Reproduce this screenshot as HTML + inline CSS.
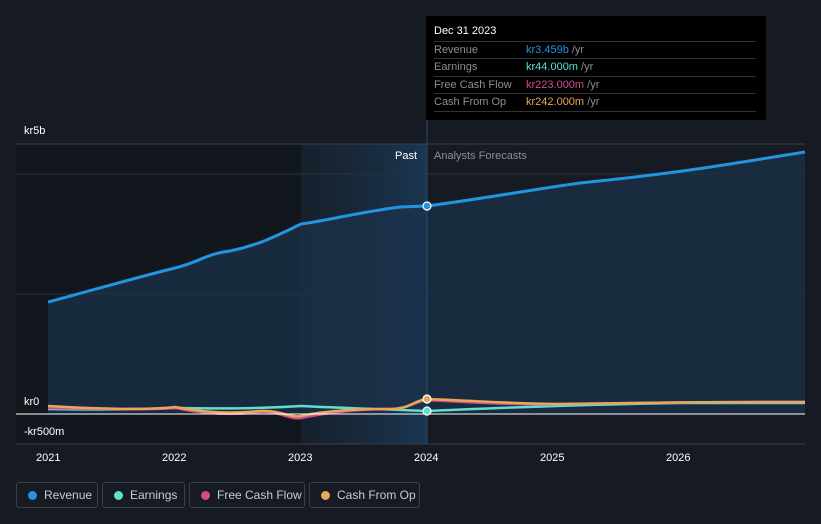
<!DOCTYPE html>
<html><head><style>
body{margin:0;width:821px;height:524px;background:#151a23;font-family:"Liberation Sans",sans-serif;overflow:hidden;position:relative}
.t{position:absolute;font-size:11px;color:#fff}
.leg{position:absolute;top:482px;height:26px;border:1px solid #3a3f49;border-radius:3px;box-sizing:border-box;color:#c9ccd2;font-size:12px;line-height:24px;padding-left:27px}
.leg i{position:absolute;left:11px;top:8px;width:9px;height:9px;border-radius:50%}
.tip{position:absolute;left:426px;top:16px;width:340px;height:104px;background:#000;font-size:11px}
.row{position:absolute;left:8px;width:322px;border-top:1px solid #333;height:17px;line-height:17px;color:#8a8f99}
.row span{position:absolute;left:92px}
</style></head><body>
<svg width="821" height="524" style="position:absolute;left:0;top:0">
<defs>
<linearGradient id="hl" x1="0" x2="1"><stop offset="0" stop-color="#1a2a3c" stop-opacity="0.4"/><stop offset="1" stop-color="#1a3a58" stop-opacity="0.9"/></linearGradient>
</defs>
<rect x="16" y="144" width="285" height="300" fill="#12161d"/>
<rect x="301" y="144" width="126" height="300" fill="url(#hl)"/>
<line x1="16" y1="144" x2="805" y2="144" stroke="#3a3f49"/>
<line x1="16" y1="174" x2="805" y2="174" stroke="#2a303a"/>
<line x1="16" y1="294" x2="805" y2="294" stroke="#2a303a"/>
<line x1="16" y1="444" x2="805" y2="444" stroke="#3a3f49"/>
<path d="M48,302 C100,288 150,274 175,268 C200,262 205,254 230,251 C260,245 280,234 301,224 C330,220 360,212 400,207 L427,206 C480,199 530,190 580,183 C630,178 680,172 730,164 L805,152 L805,414 L48,414Z" fill="#1b3249" opacity="0.75"/>
<path d="M48,302 C100,288 150,274 175,268 C200,262 205,254 230,251 C260,245 280,234 301,224 C330,220 360,212 400,207 L427,206 C480,199 530,190 580,183 C630,178 680,172 730,164 L805,152" fill="none" stroke="#2394df" stroke-width="3"/>
<line x1="427" y1="16" x2="427" y2="444" stroke="#2b4a66"/>
<path d="M48,409 C100,410 150,409 175,408 C230,409 270,408 301,406 C340,408 380,409 427,411 C500,408 560,405 680,403 L805,403" fill="none" stroke="#5ee0cc" stroke-width="2.5"/>
<path d="M48,408 C100,409 150,410 175,408 C200,413 230,416 260,412 C280,411 290,420 301,418 C330,412 360,409 390,409 C410,409 415,401 427,400 C480,403 520,405 560,404 C620,403 680,402 805,402" fill="none" stroke="#d34b8f" stroke-width="2.5"/>
<path d="M48,406 C100,409 150,410 175,407 C200,412 230,414 260,411 C280,410 290,418 301,416 C330,410 360,409 390,409 C410,409 415,400 427,399 C480,401 520,404 560,404 C620,403 680,402 805,402" fill="none" stroke="#e8a85a" stroke-width="2.5"/>
<line x1="16" y1="414" x2="805" y2="414" stroke="#fff"/>
<circle cx="427" cy="206" r="4" fill="#2394df" stroke="#fff" stroke-width="1.2"/>
<circle cx="427" cy="411" r="4" fill="#5ee0cc" stroke="#fff" stroke-width="1.2"/>
<circle cx="427" cy="399" r="4" fill="#e8a85a" stroke="#fff" stroke-width="1.2"/>
</svg>
<div class="t" style="left:24px;top:125px">kr5b</div>
<div class="t" style="left:24px;top:396px">kr0</div>
<div class="t" style="left:24px;top:426px">-kr500m</div>
<div class="t" style="left:395px;top:150px">Past</div>
<div class="t" style="left:434px;top:150px;color:#8a8f99">Analysts Forecasts</div>
<div class="t" style="left:36px;top:452px">2021</div>
<div class="t" style="left:162px;top:452px">2022</div>
<div class="t" style="left:288px;top:452px">2023</div>
<div class="t" style="left:414px;top:452px">2024</div>
<div class="t" style="left:540px;top:452px">2025</div>
<div class="t" style="left:666px;top:452px">2026</div>
<div class="tip">
<div style="position:absolute;left:8px;top:9px;color:#fff">Dec 31 2023</div>
<div class="row" style="top:25px">Revenue<span style="color:#2394df">kr3.459b <em style="font-style:normal;color:#8a8f99">/yr</em></span></div>
<div class="row" style="top:42px">Earnings<span style="color:#5ee0cc">kr44.000m <em style="font-style:normal;color:#8a8f99">/yr</em></span></div>
<div class="row" style="top:60px">Free Cash Flow<span style="color:#d34b8f">kr223.000m <em style="font-style:normal;color:#8a8f99">/yr</em></span></div>
<div class="row" style="top:77px">Cash From Op<span style="color:#e8a85a">kr242.000m <em style="font-style:normal;color:#8a8f99">/yr</em></span></div>
<div class="row" style="top:95px;height:0"></div>
</div>
<div class="leg" style="left:16px;width:82px"><i style="background:#2394df"></i>Revenue</div>
<div class="leg" style="left:102px;width:83px"><i style="background:#5ee0cc"></i>Earnings</div>
<div class="leg" style="left:189px;width:116px"><i style="background:#d34b8f"></i>Free Cash Flow</div>
<div class="leg" style="left:309px;width:111px"><i style="background:#e8a85a"></i>Cash From Op</div>
</body></html>
